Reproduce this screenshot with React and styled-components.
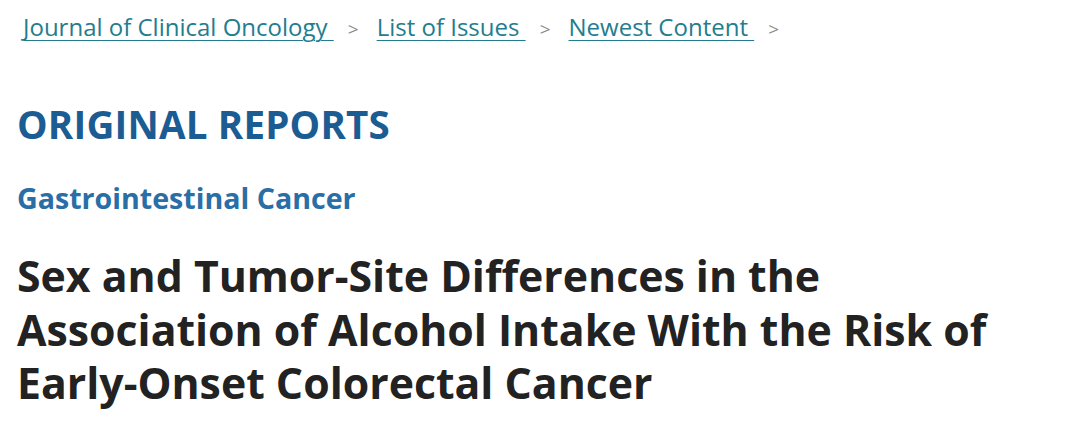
import React from 'react'
import styled, { createGlobalStyle } from 'styled-components'

const GlobalStyle = createGlobalStyle`
  html, body {
    margin: 0;
    padding: 0;
    background: #ffffff;
  }
  body {
    font-family: "Open Sans", "Noto Sans", sans-serif;
  }
`

const Page = styled.div`
  width: 1080px;
  height: 423px;
  overflow: hidden;
  padding: 11px 0 0 17px;
  box-sizing: border-box;
`

const Crumbs = styled.nav`
  display: flex;
  align-items: baseline;
  padding-left: 6px;
  font-size: 24px;
  line-height: 32px;
`

const Crumb = styled.a`
  color: #237d8e;
  text-decoration: underline;
  text-underline-offset: 4px;
  text-decoration-thickness: 1px;
  white-space: pre;
`

const Sep = styled.span`
  color: #8a8a8a;
  font-size: 19px;
  margin: 0 18px 0 14px;
`

const Section = styled.h2`
  margin: 57px 0 0;
  font-size: 38.5px;
  line-height: 44px;
  font-weight: 700;
  color: #1b5c93;
  letter-spacing: 0.2px;
`

const Subject = styled.h3`
  margin: 33px 0 0;
  font-size: 28.6px;
  line-height: 38px;
  font-weight: 700;
  color: #2a6ea6;
`

const Title = styled.h1`
  margin: 32px 0 0;
  font-size: 42.8px;
  line-height: 53.5px;
  font-weight: 700;
  color: #222222;
  max-width: 1060px;
`

const crumbs = ['Journal of Clinical Oncology ', 'List of Issues ', 'Newest Content ']

export default function App() {
  return (
    <Page>
      <GlobalStyle />
      <Crumbs>
        {crumbs.map(c => (
          <React.Fragment key={c}>
            <Crumb href="#">{c}</Crumb>
            <Sep>&gt;</Sep>
          </React.Fragment>
        ))}
      </Crumbs>
      <Section>ORIGINAL REPORTS</Section>
      <Subject>Gastrointestinal Cancer</Subject>
      <Title>
        Sex and Tumor-Site Differences in the<br />
        Association of Alcohol Intake With the Risk of<br />
        Early-Onset Colorectal Cancer
      </Title>
    </Page>
  )
}
